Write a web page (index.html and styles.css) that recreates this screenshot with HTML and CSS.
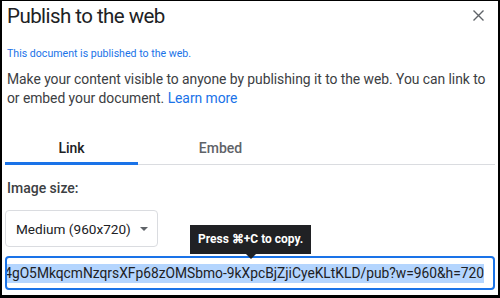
FILE: index.html
```html
<!DOCTYPE html>
<html>
<head>
<meta charset="utf-8">
<link rel="stylesheet" href="styles.css">
</head>
<body>
<div class="frame">
  <div class="dialog">
    <div class="header">
      <h1 class="title">Publish to the web</h1>
      <svg class="close" width="11" height="11" viewBox="0 0 11 11"><path d="M0.5 0.5L10.5 10.5M10.5 0.5L0.5 10.5" stroke="#5f6368" stroke-width="1.4" fill="none"/></svg>
    </div>
    <p class="status">This document is published to the web.</p>
    <p class="desc">Make your content visible to anyone by publishing it to the web. You can link to or embed your document. <a class="link">Learn more</a></p>
    <div class="tabs">
      <div class="tab tab-active">Link</div>
      <div class="tab tab-embed">Embed</div>
    </div>
    <div class="label">Image size:</div>
    <div class="select">
      <span>Medium (960x720)</span>
      <span class="caret"></span>
    </div>
    <div class="url-wrap">
      <div class="tooltip">Press ⌘+C to copy.</div>
      <div class="url"><span class="sel">https://docs.google.com/presentation/d/e/2PACX-1vR8pJv4gO5MkqcmNzqrsXFp68zOMSbmo-9kXpcBjZjiCyeKLtKLD/pub?w=960&amp;h=720</span></div>
    </div>
  </div>
</div>
</body>
</html>
```
FILE: styles.css
```css
html, body { margin: 0; padding: 0; }
body { width: 500px; height: 298px; overflow: hidden; background: #000; font-family: Roboto, "Liberation Sans", sans-serif; }
.frame { box-sizing: border-box; width: 500px; height: 298px; padding: 1px 2px 3px 2px; }
.dialog { background: #fff; height: 100%; box-sizing: border-box; padding: 0 3px 0 3px; position: relative; }
.header { display: flex; justify-content: space-between; align-items: center; height: 29px; padding: 0 0 0 2px; }
.title { margin: 0; font-weight: 400; font-size: 20.5px; color: #202124; letter-spacing: -0.55px; }
.close { margin-right: 11px; }
.status { margin: 17px 0 0 2px; font-size: 10.6px; color: #1a73e8; line-height: 14px; }
.desc { margin: 9px 0 0 2px; font-size: 13.9px; line-height: 19px; color: #3c4043; letter-spacing: -0.05px; }
.link { color: #1a73e8; }
.tabs { display: flex; margin-top: 23px; border-bottom: 1px solid #dadce0; height: 33px; }
.tab { font-size: 14px; font-weight: 500; color: #5f6368; text-align: center; line-height: 34px; box-sizing: border-box; }
.tab-active { width: 133px; color: #202124; border-bottom: 3px solid #1a73e8; margin-bottom: -1px; }
.tab-embed { width: 165px; }
.label { margin: 15px 0 0 2px; font-size: 14px; font-weight: 500; color: #3c4043; }
.select { display: inline-flex; align-items: center; margin-top: 14px; border: 1px solid #dadce0; border-radius: 4px; height: 37px; padding: 0 9px 0 10px; font-size: 13.6px; color: #202124; box-sizing: border-box; gap: 9px; }
.caret { width: 0; height: 0; border-left: 4px solid transparent; border-right: 4px solid transparent; border-top: 4px solid #5f6368; }
.url-wrap { position: relative; margin-top: 9px; }
.url { border: 2px solid #1a73e8; border-radius: 4px; height: 34px; box-sizing: border-box; display: flex; justify-content: flex-end; align-items: center; overflow: hidden; padding: 0 9px 0 2px; font-size: 13.8px; color: #202124; white-space: nowrap; }
.sel { flex-shrink: 0; background: #b4d5fe; line-height: 19px; }
.tooltip { position: absolute; left: 185px; top: -31px; background: #202124; color: #fff; font-size: 12px; font-weight: 700; padding: 0 8px; height: 29px; line-height: 29px; white-space: nowrap; }
.tooltip::after { content: ""; position: absolute; left: 56px; bottom: -5px; border-left: 5px solid transparent; border-right: 5px solid transparent; border-top: 5px solid #202124; }
```
